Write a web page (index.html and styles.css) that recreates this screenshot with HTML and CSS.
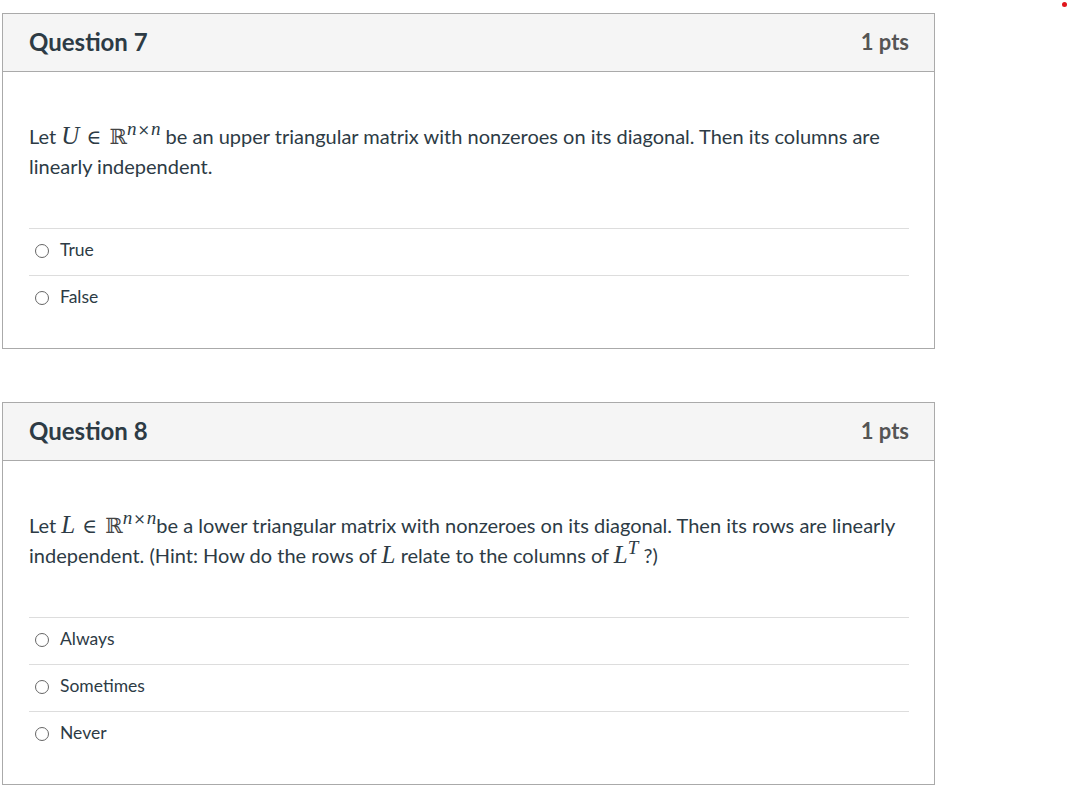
FILE: index.html
```
<!DOCTYPE html>
<html>
<head>
<meta charset="utf-8">
<link rel="stylesheet" href="styles.css">
</head>
<body>
<span class="dot"></span>
<div class="page">
  <div class="card">
    <div class="card-header">
      <span class="q-title">Question 7</span>
      <span class="q-pts">1 pts</span>
    </div>
    <div class="card-body">
      <p class="q-text">Let <span class="mi">U</span> <span class="mo">∈</span> <span class="bb">ℝ</span><sup class="sup"><span class="mi">n</span><span class="times">×</span><span class="mi">n</span></sup> be an upper triangular matrix with nonzeroes on its diagonal. Then its columns are linearly independent.</p>
      <div class="answers">
        <div class="answer"><span class="radio"></span><span class="label">True</span></div>
        <div class="answer"><span class="radio"></span><span class="label">False</span></div>
      </div>
    </div>
  </div>

  <div class="card">
    <div class="card-header">
      <span class="q-title">Question 8</span>
      <span class="q-pts">1 pts</span>
    </div>
    <div class="card-body">
      <p class="q-text">Let <span class="mi">L</span> <span class="mo">∈</span> <span class="bb">ℝ</span><sup class="sup"><span class="mi">n</span><span class="times">×</span><span class="mi">n</span></sup>be a lower triangular matrix with nonzeroes on its diagonal. Then its rows are linearly independent. (Hint: How do the rows of <span class="mi">L</span> relate to the columns of <span class="mi">L</span><sup class="sup"><span class="mi">T</span></sup> ?)</p>
      <div class="answers">
        <div class="answer"><span class="radio"></span><span class="label">Always</span></div>
        <div class="answer"><span class="radio"></span><span class="label">Sometimes</span></div>
        <div class="answer"><span class="radio"></span><span class="label">Never</span></div>
      </div>
    </div>
  </div>
</div>
</body>
</html>
```
FILE: styles.css
```
html, body {
  margin: 0;
  padding: 0;
  background: #ffffff;
}
body {
  font-family: Lato, "Noto Sans", sans-serif;
  color: #2d3b45;
  position: relative;
  width: 1069px;
  height: 791px;
  overflow: hidden;
}
.dot {
  position: absolute;
  top: 2px;
  left: 1062px;
  width: 5px;
  height: 5px;
  border-radius: 50%;
  background: #e0161c;
}
.page {
  padding: 13px 0 0 2px;
  display: flex;
  flex-direction: column;
  gap: 53px;
}
.card {
  width: 931px;
  border: 1px solid #aaaaaa;
  background: #fff;
}
.card-header {
  height: 58px;
  box-sizing: border-box;
  background: #f5f5f5;
  border-bottom: 1px solid #aaaaaa;
  display: flex;
  align-items: center;
  justify-content: space-between;
  padding: 0 25px 3px 26px;
}
.q-title {
  font-size: 24px;
  font-weight: 700;
  color: #2d3b45;
}
.q-pts {
  font-size: 22px;
  font-weight: 700;
  color: #555555;
}
.card-body {
  padding: 49px 25px 26px 26px;
}
.q-text {
  margin: 0;
  font-size: 20px;
  line-height: 30px;
}
.mi {
  font-family: "Liberation Serif", "DejaVu Serif", serif;
  font-style: italic;
  font-size: 25px;
  line-height: 0;
}
.mo {
  font-family: "DejaVu Serif", serif;
  font-size: 20px;
  padding: 0 2px;
  line-height: 0;
}
.bb {
  font-family: "DejaVu Serif", serif;
  font-size: 21px;
  color: #444;
  padding-left: 1px;
  line-height: 0;
}
.sup {
  font-size: 16px;
  line-height: 0;
  vertical-align: 9px;
}
.sup .mi {
  font-size: 19px;
}
.times {
  font-family: "DejaVu Serif", serif;
  font-size: 15px;
  padding: 0 1px;
}
.answers {
  margin-top: 47px;
}
.answer {
  display: flex;
  align-items: flex-start;
  height: 47px;
  box-sizing: border-box;
  border-top: 1px solid #dddddd;
  padding: 10px 0 0 6px;
  gap: 11px;
}
.radio {
  width: 14px;
  height: 14px;
  border: 1px solid #666;
  border-radius: 50%;
  box-sizing: border-box;
  margin-top: 5px;
}
.label {
  font-size: 17.5px;
  line-height: 22px;
  color: #2d3b45;
}
```
